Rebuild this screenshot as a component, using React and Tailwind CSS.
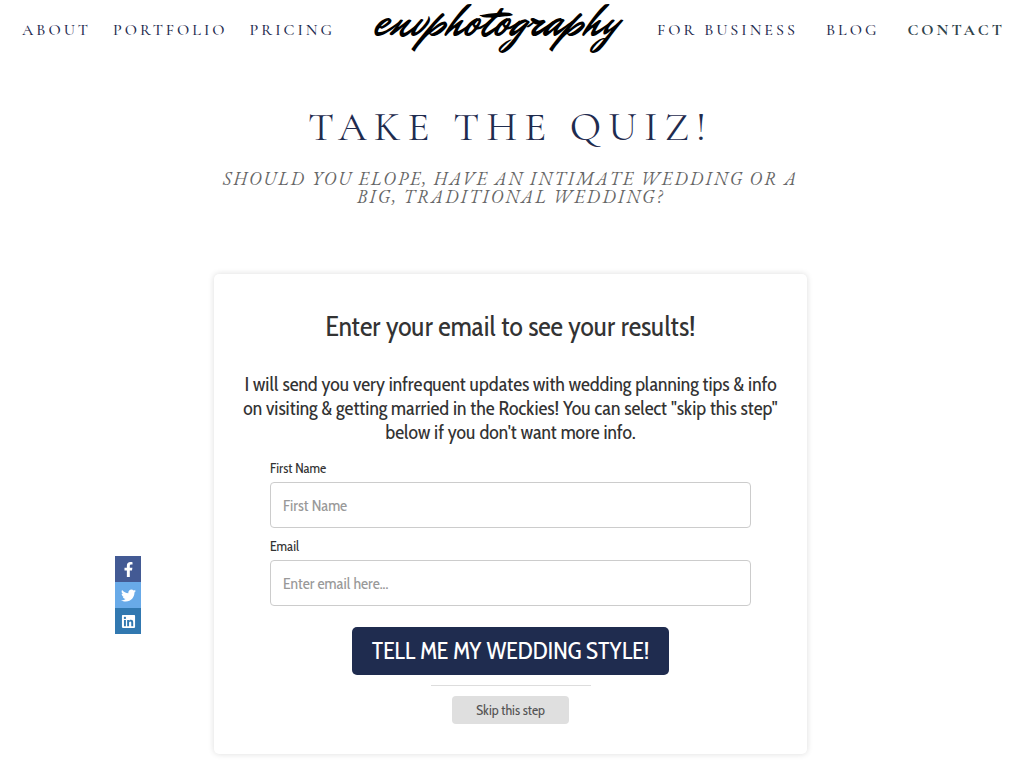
import { FaFacebookF, FaLinkedin, FaTwitter } from 'react-icons/fa';

const leftLinks = ['About', 'Portfolio', 'Pricing'];
const rightLinks = ['For Business', 'Blog'];

const socials = [
  { label: 'Facebook', Icon: FaFacebookF, color: 'bg-[#435a94]' },
  { label: 'Twitter', Icon: FaTwitter, color: 'bg-[#68aae8]' },
  { label: 'LinkedIn', Icon: FaLinkedin, color: 'bg-[#3178b0]' },
];

function Header() {
  return (
    <header className="flex h-15 items-center justify-between pl-[22px] pr-[19px] font-['Cormorant_Garamond','Cormorant','Liberation_Serif',serif] text-base font-medium uppercase tracking-[3px] whitespace-nowrap text-[#1f2c4f]">
      <nav className="flex gap-[22px]">
        {leftLinks.map(l => (
          <a key={l} href="#">{l}</a>
        ))}
      </nav>
      <a href="#" className="pb-4 font-['Mr_Dafoe','Kaushan_Script','Caveat','Dancing_Script',cursive] text-[47px] leading-none font-normal tracking-normal normal-case text-black">envphotography</a>
      <nav className="flex gap-7">
        {rightLinks.map(l => (
          <a key={l} href="#">{l}</a>
        ))}
        <a href="#" className="font-bold text-[#2f444c]">Contact</a>
      </nav>
    </header>
  );
}

function Field({ id, label, type, placeholder }) {
  return (
    <div className="mb-2 flex flex-col">
      <label htmlFor={id} className="mb-1 text-sm leading-5 text-[#333]">{label}</label>
      <input
        id={id}
        type={type}
        placeholder={placeholder}
        className="h-[46px] w-full rounded border border-[#ccc] bg-white px-3 text-base text-[#333] placeholder:text-[#999]"
      />
    </div>
  );
}

function QuizCard() {
  return (
    <section className="mx-auto mt-[68px] w-full max-w-[593px] rounded-[5px] bg-white px-6 pt-9 pb-[30px] text-center font-['Cabin_Condensed','Liberation_Sans_Narrow','Lato',sans-serif] text-[#333] shadow-[0_0_6px_rgba(0,0,0,0.14)]">
      <h2 className="text-[28px] leading-8">Enter your email to see your results!</h2>
      <p className="mt-[30px] text-xl leading-6">
        I will send you very infrequent updates with wedding planning tips &amp; info<br />
        on visiting &amp; getting married in the Rockies! You can select "skip this step"<br />
        below if you don't want more info.
      </p>

      <form className="mx-8 mt-[14px] text-left" onSubmit={e => e.preventDefault()}>
        <Field id="first-name" label="First Name" type="text" placeholder="First Name" />
        <Field id="email" label="Email" type="email" placeholder="Enter email here..." />
        <div className="mt-[21px] flex flex-col items-center">
          <button type="submit" className="h-12 rounded-[5px] bg-[#1f2c4f] px-5 text-2xl whitespace-nowrap text-white">
            TELL ME MY WEDDING STYLE!
          </button>
          <hr className="my-[10px] w-40 border-[#ddd]" />
          <button type="button" className="h-7 rounded bg-[#dfdfdf] px-6 text-sm text-[#555]">Skip this step</button>
        </div>
      </form>
    </section>
  );
}

export default function App() {
  return (
    <div className="min-h-screen bg-white pb-4">
      <Header />

      <main className="pr-[3px]">
        <div className="text-center uppercase">
          <h1 className="mt-[43px] font-['Cormorant_Garamond','Cormorant','Liberation_Serif',serif] text-[41px] leading-12 tracking-[7px] text-[#1f2c4f]">Take the Quiz!</h1>
          <p className="mx-auto mt-[19px] max-w-[600px] font-['EB_Garamond','Liberation_Serif',serif] text-lg leading-[18px] italic tracking-[2px] text-[#666]">
            Should you elope, have an intimate wedding or a<br />big, traditional wedding?
          </p>
        </div>
        <QuizCard />
      </main>

      {/* Share bar, floats over the page */}
      <aside className="fixed top-[556px] left-[115px] flex flex-col">
        {socials.map(({ label, Icon, color }) => (
          <a key={label} href="#" aria-label={label} className={`flex size-[26px] items-center justify-center text-white ${color}`}>
            <Icon size={15} />
          </a>
        ))}
      </aside>
    </div>
  );
}
